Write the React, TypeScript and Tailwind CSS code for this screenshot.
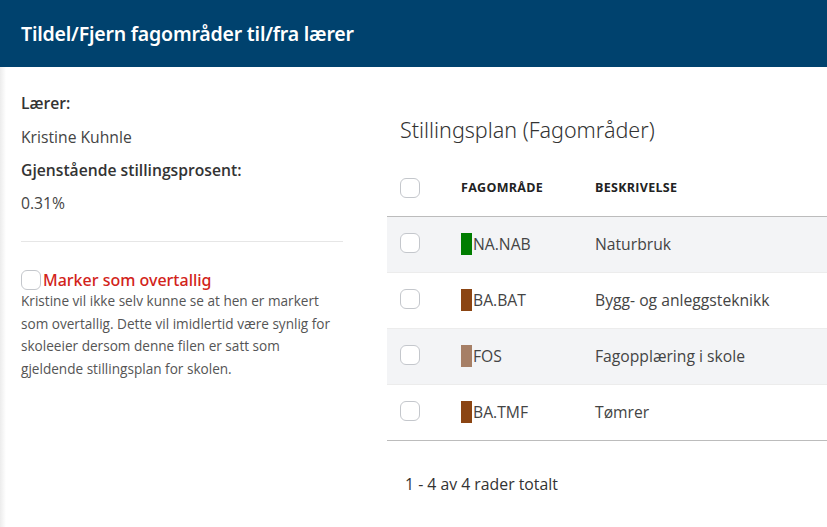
import React from "react";

const rows = [
  { code: "NA.NAB", desc: "Naturbruk", color: "#007d00" },
  { code: "BA.BAT", desc: "Bygg- og anleggsteknikk", color: "#8b4513" },
  { code: "FOS", desc: "Fagopplæring i skole", color: "#a67f66" },
  { code: "BA.TMF", desc: "Tømrer", color: "#8b4513" },
];

function Box() {
  return <span className="block w-[20px] h-[20px] rounded-[6px] border border-[#c4c7cc] bg-white shrink-0" />;
}

export default function App() {
  const body = { fontFamily: '"Open Sans", "Noto Sans", sans-serif' };
  const head = { fontFamily: '"Noto Sans", "Open Sans", sans-serif' };
  return (
    <div className="w-[827px] h-[527px] bg-white overflow-hidden text-[#333] flex flex-col" style={body}>
      <div className="h-[67px] shrink-0 bg-[#00426e] flex items-center pl-[21px]">
        <h1 className="text-white text-[19.5px] font-semibold tracking-[-0.2px]" style={head}>
          Tildel/Fjern fagområder til/fra lærer
        </h1>
      </div>
      <div className="flex flex-1">
        <div className="w-[387px] shrink-0 pl-[21px] pr-[40px] pt-[26px] bg-[linear-gradient(to_right,#ececec,#ffffff_6px)]">
          <div className="text-[15.7px] font-semibold leading-[20px]">Lærer:</div>
          <div className="text-[15.7px] leading-[20px] mt-[14px] text-[#444]">Kristine Kuhnle</div>
          <div className="text-[15.7px] font-semibold leading-[20px] mt-[13px]">Gjenstående stillingsprosent:</div>
          <div className="text-[15.7px] leading-[20px] mt-[13px] text-[#444]">0.31%</div>
          <div className="h-px bg-[#e6e6e6] mt-[28px] w-[322px]" />
          <div className="flex items-center mt-[28px]">
            <Box />
            <span className="text-[16px] font-medium text-[#d2231a] leading-[20px] ml-[2px]" style={head}>Marker som overtallig</span>
          </div>
          <p className="text-[13.6px] leading-[22.7px] text-[#555] mt-0 w-[318px]">
            Kristine vil ikke selv kunne se at hen er markert som overtallig. Dette vil imidlertid være synlig for skoleeier dersom denne filen er satt som gjeldende stillingsplan for skolen.
          </p>
        </div>
        <div className="flex-1">
          <h2 className="text-[21.5px] font-light text-[#333] pl-[13px] mt-[50px] leading-[26px]" style={head}>
            Stillingsplan (Fagområder)
          </h2>
          <div className="mt-[18px]">
            <div className="flex items-center h-[56px] border-b border-[#bcbcbc]">
              <div className="w-[74px] pl-[13px] pb-[2px]"><Box /></div>
              <div className="w-[134px] text-[12.5px] font-bold text-[#222] tracking-[0.3px]">FAGOMRÅDE</div>
              <div className="text-[12.5px] font-bold text-[#222] tracking-[0.3px]">BESKRIVELSE</div>
            </div>
            {rows.map((r, i) => (
              <div
                key={r.code}
                className={`flex items-center h-[56px] ${i % 2 === 0 ? "bg-[#f3f4f6]" : "bg-white"} ${i === rows.length - 1 ? "border-b border-[#bcbcbc]" : "border-b border-[#ececec]"}`}
              >
                <div className="w-[74px] pl-[13px] pb-[3px]"><Box /></div>
                <div className="w-[134px] flex items-center text-[15.7px] text-[#444]">
                  <span className="w-[11px] h-[22px] mr-px" style={{ backgroundColor: r.color }} />
                  {r.code}
                </div>
                <div className="text-[15.7px] text-[#444]">{r.desc}</div>
              </div>
            ))}
          </div>
          <div className="pl-[18px] mt-[33px] text-[15.8px] text-[#333] leading-[20px]">1 - 4 av 4 rader totalt</div>
        </div>
      </div>
    </div>
  );
}
